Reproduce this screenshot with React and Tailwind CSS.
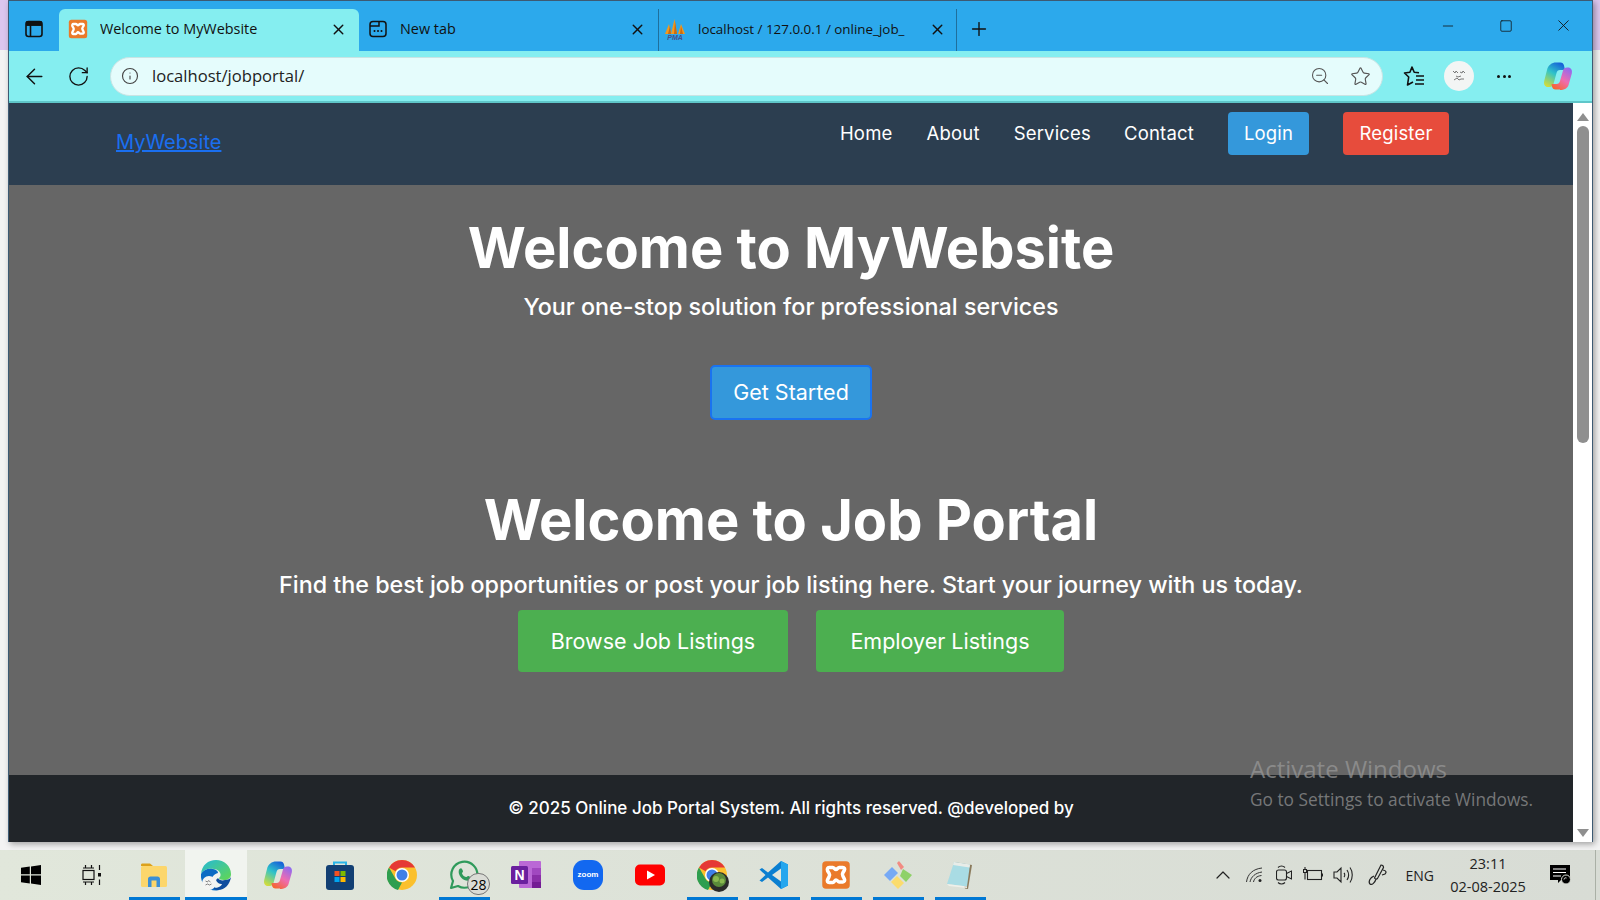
import React from "react";
import { X, ArrowLeft, RotateCw, Info, ZoomOut, Star, Plus, Minus, Square, ChevronUp } from "lucide-react";

const XamppIcon = ({ size = 20 }) => (
  <svg width={size} height={size} viewBox="0 0 24 24">
    <rect x="1" y="1" width="22" height="22" rx="3" fill="#ea7a2a" />
    <path d="M6.500 6h3c1 0 1.500 1.600 2.500 1.600S13.500 6 14.500 6h3c1.200 0 1.800 1.200 1.200 2.200l-1.200 2c-.5.8-.5 1.800 0 2.600l1.200 2.400c.6 1.200 0 2.300-1.200 2.300h-3c-1 0-1.500-1.600-2.500-1.600S10.500 18 9.500 18h-3c-1.200 0-1.800-1.100-1.200-2.300l1.200-2.400c.5-.8.5-1.800 0-2.600l-1.200-2C4.700 7.200 5.300 6 6.500 6z" fill="none" stroke="#fff" strokeWidth="2.800" />
  </svg>
);

const TabLayoutIcon = () => (
  <svg width="20" height="20" viewBox="0 0 20 20" fill="none" stroke="#111" strokeWidth="1.600">
    <rect x="2" y="2.500" width="16" height="15" rx="2.500" />
    <path d="M2 6h16M6.500 6v11.500" />
    <path d="M3 3h14v3H3z" fill="#111" />
  </svg>
);

const NewTabIcon = () => (
  <svg width="20" height="20" viewBox="0 0 20 20" fill="none" stroke="#111" strokeWidth="1.500">
    <rect x="2" y="2.500" width="16" height="15" rx="3" />
    <path d="M2 7h9V2.500" />
    <path d="M6.500 12h.01M10 12h.01M13.500 12h.01" strokeWidth="2" strokeLinecap="round" />
  </svg>
);

const PmaIcon = () => (
  <svg width="22" height="24" viewBox="0 0 22 24">
    <path d="M1 17 5 7l2 10zM7 17 10.500 2 13 17zM14 17l3-10 4 10z" fill="#f29a1f" />
    <path d="M4 17 6 9l1 8zM10 17l1-13 2 13zM16 17l1-8 2 8z" fill="#c96a12" />
    <text x="11" y="23" textAnchor="middle" fontSize="7" fontStyle="italic" fontWeight="700" fill="#44508a" fontFamily="Liberation Sans, sans-serif">PMA</text>
  </svg>
);

const FavoritesIcon = () => (
  <svg width="24" height="24" viewBox="0 0 24 24" fill="none" stroke="#111" strokeWidth="1.600" strokeLinejoin="round">
    <path d="M17 8.800 12.200 8.300 10 3 7.900 8.300 2.500 9l4.200 4L5.500 21l5.500-3" />
    <path d="M14 12h8M14 16h8M13 20h9" strokeWidth="1.500" />
  </svg>
);

const CopilotIcon = ({ size = 30, id = "a" }) => (
  <svg width={size} height={size} viewBox="0 0 30 30">
    <defs>
      <linearGradient id={`copA${id}`} x1="0.700" y1="0" x2="0.200" y2="1">
        <stop offset="0" stopColor="#1763d8" />
        <stop offset="0.450" stopColor="#2ec3c9" />
        <stop offset="1" stopColor="#d3dc3a" />
      </linearGradient>
      <linearGradient id={`copB${id}`} x1="0.800" y1="0" x2="0.200" y2="1">
        <stop offset="0" stopColor="#8f6af0" />
        <stop offset="0.500" stopColor="#ee6cb0" />
        <stop offset="1" stopColor="#f5652a" />
      </linearGradient>
    </defs>
    <path d="M13 1.500h4.500c2 0 3 1 3.500 3l1 4.500h-5c-2 0-3 1-3.500 3l-3 11c-.5 2-2 3-4 3H5c-3 0-4.500-2.500-3.800-6l2.800-11c1-5 5-7.500 9-7.500z" fill={`url(#copA${id})`} />
    <path d="M17 28.500h-4.500c-2 0-3-1-3.500-3L8.500 23h5c2 0 3-1 3.500-3l3-10.500c.5-2 2-3 4-3h1c3 0 4.500 2.500 3.800 6l-2.800 10c-1 5-5 6.500-9 6.500z" fill={`url(#copB${id})`} />
  </svg>
);

const EdgeIcon = () => (
  <svg width="32" height="32" viewBox="0 0 32 32">
    <defs>
      <linearGradient id="edgeA" x1="0" y1="0" x2="1" y2="1">
        <stop offset="0" stopColor="#25b8d8" />
        <stop offset="1" stopColor="#63d84f" />
      </linearGradient>
    </defs>
    <path d="M1 15C2 6 8 1 16 1c8 0 15 6 15 14 0 4-3 6-7 6-3 0-5-1-5-2 3-2 2-8-5-9C8 9 3 11 1 15z" fill="url(#edgeA)" />
    <path d="M1 15c2-4 7-6 12-5 3 .5 5 2 5 4-4 1-8 5-6 10 1 3 4 6 8 7-1 0-3 .500-4 .500C7 31.500 0 24 1 15z" fill="#0c6cc4" />
    <path d="M18 19c1 2 4 3 7 2 3 0 5-1 6-3-1 7-6 13-13 13-2 0-4-1-5-2 3 .500 8-1 9-4-2 .500-5-1-6-4z" fill="#0e4d9e" />
    <circle cx="9" cy="24" r="7" fill="#f4f4f2" />
    <path d="M5.500 22l2 1 1-1.500 2 1.500M5.500 26l2-1 2 1 2-1" stroke="#777" strokeWidth="0.900" fill="none" />
  </svg>
);

const ChromeIcon = ({ badge }) => (
  <div className="relative w-[30px] h-[30px]">
    <svg width="30" height="30" viewBox="0 0 30 30">
      <circle cx="15" cy="15" r="15" fill="#fbc02d" />
      <path d="M15 0a15 15 0 0 1 13 7.500H15a7.500 7.500 0 0 0-6.500 3.750L2 7.500A15 15 0 0 1 15 0z" fill="#e53935" />
      <path d="M2 7.500l6.500 11.250A7.500 7.500 0 0 0 15 22.500L11 30A15 15 0 0 1 2 7.500z" fill="#2e9e4f" />
      <circle cx="15" cy="15" r="7" fill="#fff" />
      <circle cx="15" cy="15" r="5.500" fill="#3f7fe8" />
    </svg>
    {badge && (
      <svg className="absolute right-[-2px] bottom-[-2px]" width="20" height="20" viewBox="0 0 20 20">
        <circle cx="10" cy="10" r="10" fill="#2a2a2a" />
        <circle cx="10" cy="8" r="7" fill="#5a8a3a" />
        <circle cx="7" cy="7" r="3" fill="#8ab84f" />
        <circle cx="13" cy="9" r="2.500" fill="#8ab84f" />
      </svg>
    )}
  </div>
);

const TaskIcons = {
  windows: (
    <svg width="20" height="20" viewBox="0 0 20 20" fill="#000">
      <path d="M0 2.800 8.800 1.600v7.700H0zM10 1.400 20 0v9.300H10zM0 10.600h8.800v7.800L0 17.200zM10 10.600h10V20l-10-1.400z" />
    </svg>
  ),
  taskview: (
    <svg width="20" height="20" viewBox="0 0 20 20" fill="none" stroke="#111" strokeWidth="1.200">
      <rect x="1" y="5.500" width="11" height="9" />
      <path d="M1 3h11M1 17h11M3.500 0v3M9.500 0v3M3.500 17v3M9.500 17v3" />
      <rect x="16" y="8" width="3" height="3.500" fill="#111" stroke="none" />
      <path d="M17.500 0v5M17.500 14.500V20" />
    </svg>
  ),
  explorer: (
    <svg width="28" height="28" viewBox="0 0 28 28">
      <path d="M1 4c0-1 .5-1.500 1.500-1.500H10L13 5H1z" fill="#dca11c" />
      <rect x="1" y="5" width="26" height="21" rx="1.500" fill="#fcd66b" />
      <path d="M8 26v-8c0-1.500 1-2.500 2.500-2.500h7c1.500 0 2.500 1 2.500 2.500v8h-3.500v-6.500h-5V26z" fill="#3b8fd6" />
    </svg>
  ),
  store: (
    <svg width="28" height="30" viewBox="0 0 28 30">
      <path d="M8 5V2.500h12V5" fill="none" stroke="#27b4e8" strokeWidth="2" />
      <rect x="0" y="5" width="28" height="25" rx="3" fill="#123f73" />
      <rect x="8.500" y="11" width="5" height="5" fill="#f25022" />
      <rect x="14.500" y="11" width="5" height="5" fill="#7fba00" />
      <rect x="8.500" y="17" width="5" height="5" fill="#00a4ef" />
      <rect x="14.500" y="17" width="5" height="5" fill="#ffb900" />
    </svg>
  ),
  whatsapp: (
    <div className="relative w-[30px] h-[30px]">
      <svg width="30" height="30" viewBox="0 0 30 30" fill="none">
        <path d="M2 28l2-7A13 13 0 1 1 9 26z" stroke="#2f9a5b" strokeWidth="2.200" strokeLinejoin="round" />
        <path d="M10.500 9c1-1 2-1 2.500 0l1 2c.3.800-1 1.500-1 2.500 .5 1.500 2 3 4 3.500 1 0 1.500-1.500 2.500-1l2 1c1 .5 .5 2-.5 3-2 1.500-6 .5-8.500-2-3-3-3.500-7-2-9z" fill="#2f9a5b" />
      </svg>
      <div className="absolute left-[18px] top-[13px] flex h-[22px] w-[23px] items-center justify-center rounded-full border border-[#777] bg-[#dadcd6] text-[14px] text-black">28</div>
    </div>
  ),
  onenote: (
    <svg width="30" height="30" viewBox="0 0 30 30">
      <rect x="8" y="1" width="22" height="27" rx="1" fill="#ba68d6" />
      <rect x="21" y="8" width="9" height="7" fill="#a148c0" />
      <rect x="21" y="15" width="9" height="7" fill="#8a2fa8" />
      <rect x="21" y="22" width="9" height="6" fill="#731c94" />
      <rect x="0" y="6" width="17" height="18" rx="1.500" fill="#6a1f9e" />
      <text x="8.500" y="20" textAnchor="middle" fontSize="14" fontWeight="700" fill="#fff" fontFamily="Liberation Sans, sans-serif">N</text>
    </svg>
  ),
  zoom: (
    <div className="flex h-[30px] w-[30px] items-center justify-center rounded-[11px] bg-[#1268f0] font-['Liberation_Sans',sans-serif] text-[8px] font-bold text-white">zoom</div>
  ),
  youtube: (
    <svg width="30" height="22" viewBox="0 0 30 22">
      <rect width="30" height="21" rx="5" y="0.500" fill="#f00" />
      <path d="M12 6.500v9l8-4.500z" fill="#fff" />
    </svg>
  ),
  vscode: (
    <svg width="30" height="30" viewBox="0 0 30 30">
      <path d="M22 1l7 3.500v21L22 29 9 17.500 3 22 .5 20.500 6.500 15 .5 9.500 3 8l6 4.500z" fill="#0a7fd1" />
      <path d="M22 1l7 3.500v21L22 29z" fill="#25a6ee" />
      <path d="M22 8.500 13 15l9 6.500z" fill="#e2e6dc" />
    </svg>
  ),
  gitkraken: (
    <svg width="30" height="30" viewBox="0 0 30 30">
      <path d="M1 15l8-8 6 6-8 8z" fill="#76a9f5" />
      <path d="M14 3l2-2 5 6-3 3z" fill="#f28b82" />
      <path d="M20 9l9 6-6 7-6-6z" fill="#8fd168" />
      <path d="M8 22l6-6 7 7-6 6z" fill="#fbdc6e" />
    </svg>
  ),
  notepad: (
    <svg width="28" height="30" viewBox="0 0 28 30">
      <path d="M8 2l18 3-4 24-3-.500z" fill="#8a7a5c" />
      <path d="M8 2l16 2.500-3 22L1 24z" fill="#a9dce4" />
      <path d="M8 2l16 2.500-.500 3L7 5z" fill="#e8ece8" />
      <path d="M1 24l20 2.500 0 1.500L3 26z" fill="#eef0ea" />
    </svg>
  ),
};

const TrayWifi = () => (
  <svg width="18" height="16" viewBox="0 0 18 16" fill="none" stroke="#333" strokeWidth="1">
    <path d="M.5 15C1.500 7 7 2 16 1M4 15c1-5 5-9 12-10M7.500 15c.5-3 3-6 8-6.500" />
    <circle cx="14" cy="13.500" r="1.500" fill="#222" stroke="none" />
  </svg>
);

const TrayCamera = () => (
  <svg width="16" height="20" viewBox="0 0 16 20" fill="none" stroke="#222" strokeWidth="1.100">
    <rect x="0.500" y="5" width="10" height="10" rx="2" />
    <path d="M10.500 8.500 15.500 6v8l-5-2.500M2 2.500C4 .5 7 .5 9 2.500M2 17.500c2 2 5 2 7 0" />
  </svg>
);

const TrayBattery = () => (
  <svg width="20" height="16" viewBox="0 0 20 16" fill="none" stroke="#222" strokeWidth="1.100">
    <rect x="4.500" y="3.500" width="14" height="9" />
    <path d="M19.500 6.500v3M2 0v2.500M0.500 2.500h3v3h-3zM2 5.500v7" />
  </svg>
);

const TrayVolume = () => (
  <svg width="20" height="20" viewBox="0 0 20 20" fill="none" stroke="#222" strokeWidth="1.100">
    <path d="M1 7h3l4-4v14l-4-4H1zM11 8c1 1 1 3 0 4M14 5c2 3 2 7 0 10M17 2.500c3 4 3 11 0 15" />
  </svg>
);

const TrayPen = () => (
  <svg width="22" height="22" viewBox="0 0 22 22" fill="none" stroke="#222" strokeWidth="1.200">
    <path d="M14 1c1.500 0 2.500 1 2.500 2.500l-6 11c-1 1-2.500.5-3-.5zM7 12c-4 1.500-6 6-4 8 2 1.500 5-1.500 6-5M16 6c3 .5 4 2 2 4l-3 1" />
  </svg>
);

const NotificationIcon = () => (
  <svg width="22" height="22" viewBox="0 0 22 22">
    <path d="M0 1h20v15h-9l-3 3v-3H0z" fill="#000" />
    <path d="M3 5h13M3 8.500h13M3 12h8" stroke="#fff" strokeWidth="1.100" />
    <circle cx="16" cy="15.500" r="4.500" fill="#000" stroke="#dcdfd8" strokeWidth="1" />
    <path d="M14 15.500c0-1.500 1.500-2 2.500-1.500" stroke="#fff" strokeWidth="0.900" fill="none" />
  </svg>
);

const TaskSlot = ({ children, active, open }) => (
  <div className={`relative flex h-full w-[62px] items-center justify-center ${active ? "bg-[#f1f4ef]" : ""}`}>
    {children}
    {open && <div className={`absolute bottom-0 h-[3px] bg-[#0078d4] ${active ? "left-0 right-0" : "left-[6px] right-[5px]"}`} />}
  </div>
);

const BrowserTab = ({ icon, title, active, separator }) => (
  <div className={`flex h-[42px] w-[300px] items-center pb-[2px] pl-[9px] pr-[12px] ${active ? "rounded-t-[6px] bg-[#85eef0]" : ""} ${separator ? "border-r border-[#1f6f9c]" : ""}`}>
    <div className="flex w-[32px] shrink-0 items-center">{icon}</div>
    <span className="flex-1 truncate text-[14.400px] text-[#111]">{title}</span>
    <X size={17} strokeWidth={2} className="ml-2 text-[#111]" />
  </div>
);

const NavLink = ({ children }) => (
  <span className="text-[18.500px] tracking-[0.01em] text-white">{children}</span>
);

export default function App() {
  return (
    <div className="flex h-[900px] w-[1600px] flex-col overflow-hidden bg-[linear-gradient(to_bottom,#dcc6ee_50px,#f3f3f3_50px)] font-['Open_Sans',sans-serif]">
      <div className="flex h-[850px] pb-[8px] pl-[8px] pr-[7px]">
        <div className="relative flex flex-1 flex-col border-l border-t border-r border-[#3d5a73] shadow-[2px_2px_6px_rgba(0,0,0,0.35)]">
          {/* tab strip */}
          <div className="flex h-[50px] items-end bg-[#2ca9ec]">
            <div className="flex h-[42px] w-[50px] items-center justify-center pb-[2px] pr-[1px]"><TabLayoutIcon /></div>
            <BrowserTab active icon={<XamppIcon />} title="Welcome to MyWebsite" />
            <BrowserTab separator icon={<NewTabIcon />} title="New tab" />
            <div className="flex h-[42px] w-[298px] items-center border-r border-[#1f6f9c] pb-[2px] pl-[5px] pr-[10px]">
              <div className="flex w-[32px] shrink-0"><PmaIcon /></div>
              <span className="flex-1 whitespace-nowrap pl-[2px] text-[13.400px] text-[#111]">localhost / 127.0.0.1 / online_job_</span>
              <X size={17} strokeWidth={2} className="ml-1 text-[#111]" />
            </div>
            <div className="flex h-[42px] w-[44px] items-center justify-center pb-[2px]"><Plus size={22} strokeWidth={1.500} className="text-[#111]" /></div>
            <div className="flex-1" />
            <div className="flex h-[50px] items-center self-start pb-[1px] pr-[1px]">
              <div className="flex w-[58px] justify-center"><Minus size={16} strokeWidth={1.200} className="text-[#111]" /></div>
              <div className="flex w-[58px] justify-center"><Square size={14} strokeWidth={1.300} className="text-[#111]" /></div>
              <div className="flex w-[56px] justify-center"><X size={19} strokeWidth={1.100} className="text-[#111]" /></div>
            </div>
          </div>

          {/* address bar */}
          <div className="flex h-[52px] items-center border-b-2 border-[#5fc6c9] bg-[#85eef0] pl-[13px] pr-[19px]">
            <ArrowLeft size={25} strokeWidth={1.400} className="text-[#111]" />
            <RotateCw size={23} strokeWidth={1.400} className="ml-[20px] text-[#111]" />
            <div className="ml-[20px] flex h-[39px] flex-1 items-center rounded-full border border-[#c9e4e4] bg-[#e5fcfc] pl-[10px] pr-[11px]">
              <Info size={18} strokeWidth={1.500} className="text-[#444]" />
              <span className="ml-[13px] flex-1 text-[16.600px] text-[#222]">localhost/jobportal/</span>
              <ZoomOut size={20} strokeWidth={1.300} className="text-[#555]" />
              <Star size={21} strokeWidth={1.300} className="ml-[20px] text-[#555]" />
            </div>
            <div className="ml-[19px]"><FavoritesIcon /></div>
            <div className="ml-[18px] flex h-[30px] w-[30px] items-center justify-center rounded-full bg-[#f3f5f4]">
              <svg width="16" height="16" viewBox="0 0 16 16" fill="none" stroke="#777" strokeWidth="1">
                <path d="M2 3l2 2 1-2 2 2M9 4l2 1 1-2 2 2M3 12l3-2 2 2 2-1 3 0M5 8l2 1 3-1" />
              </svg>
            </div>
            <div className="ml-[17px] flex w-[26px] justify-center gap-[2.500px]">
              <span className="h-[3px] w-[3px] rounded-full bg-[#111]" />
              <span className="h-[3px] w-[3px] rounded-full bg-[#111]" />
              <span className="h-[3px] w-[3px] rounded-full bg-[#111]" />
            </div>
            <div className="ml-[26px]"><CopilotIcon id="top" /></div>
          </div>

          {/* page */}
          <div className="flex min-h-0 flex-1">
            <div className="flex flex-1 flex-col font-['Inter',sans-serif]">
              <header className="flex h-[82px] justify-between bg-[#2c3e50] pl-[107px] pr-[124px]">
                <a href="#" className="mt-[24px] text-[20px] text-[#1a6ff0] underline">MyWebsite</a>
                <nav className="flex h-[61px] items-center">
                  <div className="mr-[34px]"><NavLink>Home</NavLink></div>
                  <div className="mr-[34px]"><NavLink>About</NavLink></div>
                  <div className="mr-[32px]"><NavLink>Services</NavLink></div>
                  <div className="mr-[34px] pl-[1px]"><NavLink>Contact</NavLink></div>
                  <div className="mr-[34px] flex h-[43px] w-[81px] items-center justify-center rounded-[4px] bg-[#3498db]"><NavLink>Login</NavLink></div>
                  <div className="flex h-[43px] w-[106px] items-center justify-center rounded-[4px] bg-[#e74c3c]"><NavLink>Register</NavLink></div>
                </nav>
              </header>

              <main className="flex flex-1 flex-col items-center bg-[#666666] text-white">
                <h1 className="mt-[26px] text-[56px] font-bold leading-[74px]">Welcome to MyWebsite</h1>
                <p className="mt-[4px] text-[23.300px] font-medium leading-[36px]">Your one-stop solution for professional services</p>
                <button className="mt-[40px] flex h-[55px] w-[162px] items-center justify-center rounded-[5px] border-2 border-[#1a73f0] bg-[#3498db] text-[21.500px]">Get Started</button>
                <h2 className="mt-[62px] text-[56px] font-bold leading-[76px]">Welcome to Job Portal</h2>
                <p className="mt-[9px] text-[23.300px] font-medium leading-[36px]">Find the best job opportunities or post your job listing here. Start your journey with us today.</p>
                <div className="mt-[7px] flex gap-[28px]">
                  <button className="flex h-[62px] w-[270px] items-center justify-center rounded-[4px] bg-[#4caf50] text-[21.500px]">Browse Job Listings</button>
                  <button className="flex h-[62px] w-[248px] items-center justify-center rounded-[4px] bg-[#4caf50] text-[21.500px]">Employer Listings</button>
                </div>
              </main>

              <footer className="flex h-[67px] items-center justify-center bg-[#212529] text-[17px] font-medium text-white">
                © 2025 Online Job Portal System. All rights reserved. @developed by
              </footer>
            </div>

            {/* scrollbar */}
            <div className="flex w-[19px] flex-col items-center bg-white pt-[10px]">
              <div className="h-0 w-0 border-x-[6px] border-b-[8px] border-x-transparent border-b-[#8f8f8f]" />
              <div className="mt-[5px] h-[317px] w-[12px] rounded-full bg-[#8f8f8f]" />
              <div className="flex-1" />
              <div className="mb-[5px] h-0 w-0 border-x-[6px] border-t-[8px] border-x-transparent border-t-[#8f8f8f]" />
            </div>
          </div>

          {/* watermark sits over the page */}
          <div className="pointer-events-none absolute left-[1241px] top-[752px] text-[#9a9a9a] opacity-70">
            <div className="text-[24px] leading-[32px]">Activate Windows</div>
            <div className="text-[17.300px] leading-[29px]">Go to Settings to activate Windows.</div>
          </div>
        </div>
      </div>

      {/* taskbar */}
      <div className="flex h-[50px] items-center bg-gradient-to-r from-[#e1e7db] to-[#d8dcd5] text-[#222]">
        <div className="flex h-full w-[61px] items-center justify-center">{TaskIcons.windows}</div>
        <div className="flex h-full w-[62px] items-center justify-center">{TaskIcons.taskview}</div>
        <TaskSlot open>{TaskIcons.explorer}</TaskSlot>
        <TaskSlot active open><EdgeIcon /></TaskSlot>
        <TaskSlot><CopilotIcon id="bar" /></TaskSlot>
        <TaskSlot>{TaskIcons.store}</TaskSlot>
        <TaskSlot><ChromeIcon /></TaskSlot>
        <TaskSlot open>{TaskIcons.whatsapp}</TaskSlot>
        <TaskSlot>{TaskIcons.onenote}</TaskSlot>
        <TaskSlot>{TaskIcons.zoom}</TaskSlot>
        <TaskSlot>{TaskIcons.youtube}</TaskSlot>
        <TaskSlot open><ChromeIcon badge /></TaskSlot>
        <TaskSlot open>{TaskIcons.vscode}</TaskSlot>
        <TaskSlot open><XamppIcon size={30} /></TaskSlot>
        <TaskSlot open>{TaskIcons.gitkraken}</TaskSlot>
        <TaskSlot open>{TaskIcons.notepad}</TaskSlot>
        <div className="flex-1" />
        <div className="flex h-full items-center">
          <ChevronUp size={24} strokeWidth={1.200} className="mr-[11px] text-[#222]" />
          <div className="mr-[12px]"><TrayWifi /></div>
          <div className="mr-[11px]"><TrayCamera /></div>
          <div className="mr-[10px]"><TrayBattery /></div>
          <div className="mr-[14px]"><TrayVolume /></div>
          <div className="mr-[17px]"><TrayPen /></div>
          <span className="mr-[15px] text-[14px]">ENG</span>
          <div className="mr-[23px] flex w-[78px] flex-col items-center text-[14.500px] leading-[23px]">
            <span>23:11</span>
            <span>02-08-2025</span>
          </div>
          <div className="mr-[23px]"><NotificationIcon /></div>
          <div className="h-full w-px bg-[#aab0a6]" />
          <div className="w-[4px]" />
        </div>
      </div>
    </div>
  );
}
